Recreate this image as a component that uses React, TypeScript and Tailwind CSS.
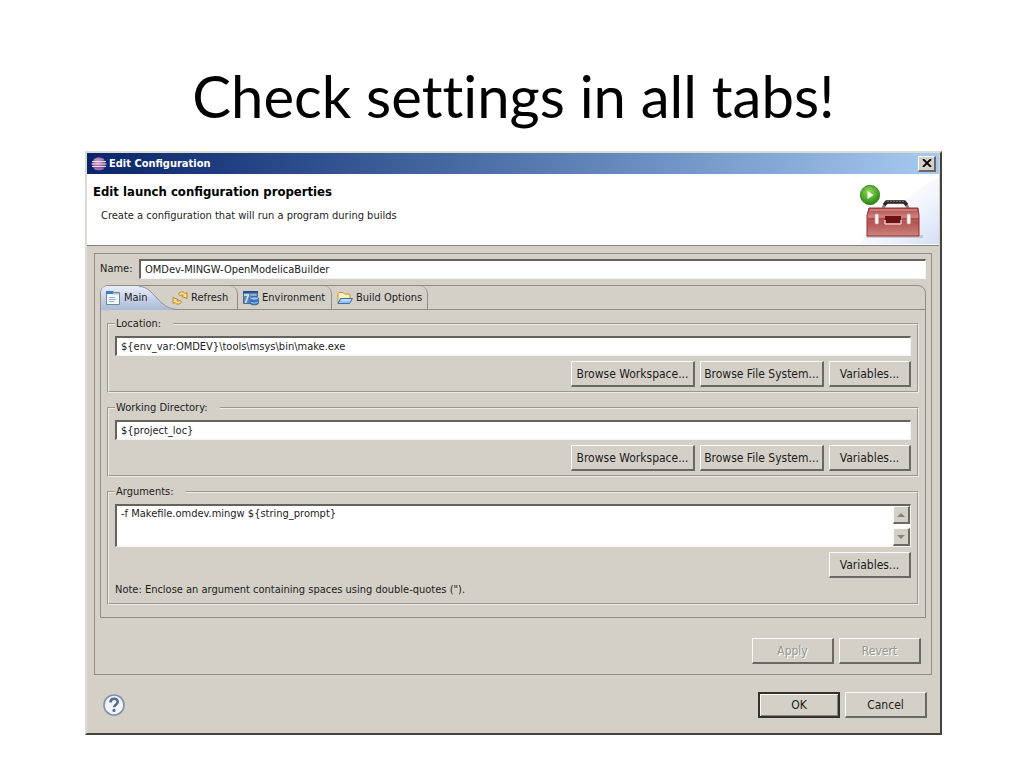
import { useState } from 'react';
import type { ReactNode } from 'react';

const SUNKEN =
  'border border-t-2 border-l-2 border-t-[#66635d] border-l-[#66635d] border-r-[#f6f4f0] border-b-[#f6f4f0] bg-white';

const FIELD = `block w-full pl-1 text-[11px] leading-4 text-[#1c1c1c] outline-none ${SUNKEN}`;

const RAISED =
  'border border-t-[#fbfaf7] border-l-[#fbfaf7] border-r-2 border-b-2 border-r-[#6a6862] border-b-[#6a6862] bg-[#d4d0c8]';

interface DialogButtonProps {
  children: ReactNode;
  wide?: boolean;
  primary?: boolean;
  disabled?: boolean;
}

function DialogButton({ children, wide, primary, disabled }: DialogButtonProps) {
  return (
    <button
      type="button"
      disabled={disabled}
      className={`h-[26px] whitespace-nowrap text-center text-[12px] leading-4 ${wide ? 'w-[124px]' : 'w-[82px]'} ${
        primary ? 'border-2 border-[#33312e] bg-[#d4d0c8] shadow-[inset_1px_1px_0_#fbfaf7,inset_-1px_-1px_0_#8a877f]' : RAISED
      } ${disabled ? 'text-[#98958d] [text-shadow:1px_1px_0_#fff]' : 'text-[#1c1c1c]'}`}
    >
      {children}
    </button>
  );
}

interface GroupProps {
  title: string;
  children: ReactNode;
}

function Group({ title, children }: GroupProps) {
  return (
    <fieldset className="min-w-0 border-2 border-[#eeebe4] [border-style:groove] px-[6px] pb-1">
      <legend className="pl-[1px] pr-3 text-[11px] leading-4">{title}</legend>
      {children}
    </fieldset>
  );
}

function EclipseLogo() {
  return (
    <svg className="h-4 w-4" viewBox="0 0 16 16" aria-hidden="true">
      <defs>
        <radialGradient id="ball" cx="0.4" cy="0.35" r="0.7">
          <stop offset="0" stopColor="#d9a9cf" />
          <stop offset="0.6" stopColor="#8b5a9c" />
          <stop offset="1" stopColor="#4d3a86" />
        </radialGradient>
      </defs>
      <circle cx="8" cy="8" r="6.8" fill="url(#ball)" />
      <path d="M1 5.5h14M0.5 8h15M1 10.5h14" stroke="#f3dcec" strokeWidth="1.1" />
      <path d="M3 3.2h10M3.4 13h9" stroke="#c79cc8" strokeWidth="0.8" />
    </svg>
  );
}

function Toolbox() {
  return (
    <svg className="h-[70px] w-[82px]" viewBox="0 0 82 70" aria-hidden="true">
      <defs>
        <linearGradient id="sky" x1="0" y1="0" x2="1" y2="1">
          <stop offset="0.35" stopColor="#dfe8f8" stopOpacity="0" />
          <stop offset="1" stopColor="#d3dff5" />
        </linearGradient>
        <linearGradient id="redbox" x1="0" y1="0" x2="0" y2="1">
          <stop offset="0" stopColor="#a94a4a" />
          <stop offset="0.3" stopColor="#cf807c" />
          <stop offset="0.5" stopColor="#b25452" />
          <stop offset="1" stopColor="#cd827e" />
        </linearGradient>
        <radialGradient id="go" cx="0.45" cy="0.35" r="0.65">
          <stop offset="0" stopColor="#9edb62" />
          <stop offset="0.6" stopColor="#4eab2b" />
          <stop offset="1" stopColor="#2d7d1b" />
        </radialGradient>
      </defs>
      <path d="M0 70C20 54 50 18 82 3V70z" fill="url(#sky)" />
      <path d="M9 64h57v-3H9z" fill="#a9a2ae" opacity="0.5" />
      <path d="M26 34l3-6h19l3 6" fill="none" stroke="#8f898b" strokeWidth="3" />
      <path d="M27 31l3-3h17l3 3" fill="none" stroke="#33282c" strokeWidth="3.4" />
      <path d="M30 27.500h17" stroke="#6d6267" strokeWidth="1" strokeDasharray="2 1" />
      <path d="M12 34h49l1 7v21H10V41z" fill="url(#redbox)" stroke="#923331" />
      <path d="M11 45h17M45 45h17" stroke="#8e3636" />
      <path d="M13 36h47" stroke="#dda29d" />
      <path d="M28 42h16v7H28z" fill="#6d1115" />
      <path d="M28 50h16M28 46v4M44 46v4" stroke="#e8c4c0" strokeWidth="1.500" />
      <rect x="18" y="40" width="3.500" height="10" rx="1" fill="#f9f3f3" stroke="#c79f9f" strokeWidth="0.6" />
      <rect x="50" y="40" width="3.500" height="10" rx="1" fill="#f9f3f3" stroke="#c79f9f" strokeWidth="0.6" />
      <circle cx="13" cy="21" r="9.7" fill="url(#go)" stroke="#2d7d1b" strokeWidth="0.8" />
      <path d="M10.500 17v8l6-4z" fill="#f7fff0" />
    </svg>
  );
}

function MainIcon() {
  return (
    <svg className="h-4 w-4" viewBox="0 0 16 16" aria-hidden="true">
      <path d="M1.500 2.500h13v12h-13z" fill="#f4f9fe" stroke="#71878f" />
      <path d="M1 1h7.500v3H1z" fill="#3f7fc0" />
      <path d="M8.500 3H14v1.500H8.500z" fill="#a9c8e2" />
      <path d="M4 7.500h6M4 9.500h7M4 11.500h5" stroke="#8cb6e2" />
    </svg>
  );
}

function RefreshIcon() {
  return (
    <svg className="h-4 w-4" viewBox="0 0 16 16" aria-hidden="true">
      <g fill="#fbe08c" stroke="#bd8425" strokeWidth="1" strokeLinejoin="round">
        <path d="M6.500 4C8 1.500 11.500 1 13 3.500l2-1v6L9.800 6.500l1.500-1C10.500 4.500 9 4.500 8.300 6z" />
        <path d="M9.500 12C8 14.500 4.500 15 3 12.500l-2 1v-6l5.200 2-1.500 1c.8 1 2.300 1 3-.5z" />
      </g>
    </svg>
  );
}

function EnvironmentIcon() {
  return (
    <svg className="h-4 w-4" viewBox="0 0 16 16" aria-hidden="true">
      <path d="M0.500 1.500h14v5h-6v7h-8z" fill="#5f88bb" stroke="#44699b" />
      <path d="M0 1h15v2H0z" fill="#2b4f84" />
      <path d="M1 5h5M5.500 5L2.500 13" stroke="#e6edf6" strokeWidth="1.400" fill="none" />
      <path d="M7.500 5h6" stroke="#bcd0e8" />
      <path d="M7 8.500v4.500c0 2.500 8.500 2.500 8.500 0V8.500z" fill="#3474bf" stroke="#265a9d" strokeWidth="0.700" />
      <ellipse cx="11.250" cy="8.500" rx="4.250" ry="1.700" fill="#9cc3ec" stroke="#265a9d" strokeWidth="0.700" />
      <path d="M7.500 11.800c1 1.800 6.500 1.800 7.500 0" fill="none" stroke="#a9cdf3" />
    </svg>
  );
}

function FolderIcon() {
  return (
    <svg className="h-4 w-4" viewBox="0 0 16 16" aria-hidden="true">
      <path d="M1 13V3.500l1-1h4l1.500 1.500H13V8" fill="#fdf0c0" stroke="#c8922a" />
      <path d="M3.500 8.500h12L12.500 13.500H1z" fill="#9cc1ec" stroke="#3a6fb0" strokeLinejoin="round" />
      <path d="M4.500 10h9" stroke="#e6f1fc" />
    </svg>
  );
}

const TABS = [
  { name: 'Main', icon: <MainIcon />, look: 'w-[66px] pl-1' },
  { name: 'Refresh', icon: <RefreshIcon />, look: 'w-[71px] pl-[5px] border-r rounded-tr-lg' },
  { name: 'Environment', icon: <EnvironmentIcon />, look: 'w-[94px] pl-[5px] border-r rounded-tr-lg' },
  { name: 'Build Options', icon: <FolderIcon />, look: 'w-[96px] pl-[5px] border-r rounded-tr-lg' },
];

function TabStrip() {
  const [active, setActive] = useState('Main');

  return (
    <div role="tablist" className="relative flex h-[24px] border-b border-[#908d85]">
      {/* swooping shape behind the selected tab */}
      <svg className="absolute left-0 top-0 h-[24px] w-[80px]" viewBox="0 0 80 24" aria-hidden="true">
        <defs>
          <linearGradient id="tab" x1="0" y1="0" x2="0" y2="1">
            <stop offset="0" stopColor="#e9eef8" />
            <stop offset="1" stopColor="#a9b9d8" />
          </linearGradient>
        </defs>
        <path d="M0 24V7Q0 0 7 0H38C54 0 56 24 78 24z" fill="url(#tab)" />
        <path d="M38 0.500C54 0.500 56 23.500 78 23.500" fill="none" stroke="#8f9098" />
      </svg>
      {TABS.map((tab) => (
        <button
          key={tab.name}
          type="button"
          role="tab"
          aria-selected={active === tab.name}
          onClick={() => setActive(tab.name)}
          className={`relative flex items-center gap-[3px] whitespace-nowrap border-[#908d85] text-[11px] leading-4 ${tab.look}`}
        >
          {tab.icon}
          {tab.name}
        </button>
      ))}
    </div>
  );
}

function BrowseButtons() {
  return (
    <div className="mt-[5px] flex justify-end gap-[5px]">
      <DialogButton wide>Browse Workspace...</DialogButton>
      <DialogButton wide>Browse File System...</DialogButton>
      <DialogButton>Variables...</DialogButton>
    </div>
  );
}

function ScrollArrow({ up }: { up?: boolean }) {
  return (
    <button type="button" aria-label={up ? 'Scroll up' : 'Scroll down'} className={`flex h-[18px] w-[17px] items-center justify-center ${RAISED}`}>
      <svg className="h-1 w-2" viewBox="0 0 8 4" aria-hidden="true">
        <path d={up ? 'M0 4L4 0L8 4z' : 'M0 0L4 4L8 0z'} fill="#85827b" />
      </svg>
    </button>
  );
}

export default function App() {
  return (
    <main className="min-h-screen bg-white pl-[85px] pr-[82px] pt-[60px] text-[#1c1c1c]">
      <h1 className="text-center font-[Lato,sans-serif] text-[58px] leading-[72px] text-black [font-variant-ligatures:none]">
        Check settings in all tabs!
      </h1>

      <section
        aria-label="Edit Configuration"
        className="mt-[19px] border-2 border-t-[#dedbd4] border-l-[#dedbd4] border-r-[#44423f] border-b-[#44423f] bg-[#d4d0c8] pr-[1px] font-['DejaVu_Sans_Condensed','DejaVu_Sans',sans-serif] text-[11px] leading-4"
      >
        <div className="flex h-[21px] items-center bg-linear-to-r from-[#0a246a] to-[#a6caf0] pl-1 pr-[3px]">
          <EclipseLogo />
          <span className="ml-[2px] flex-1 font-bold text-white">Edit Configuration</span>
          <button type="button" aria-label="Close" className={`flex h-4 w-[18px] items-center justify-center ${RAISED}`}>
            <svg className="h-2 w-[10px]" viewBox="0 0 10 8" aria-hidden="true">
              <path d="M1 0L9 8M9 0L1 8" stroke="#000" strokeWidth="1.800" />
            </svg>
          </button>
        </div>

        <header className="flex h-[72px] justify-between border-b border-[#85827b] bg-white pl-[6px]">
          <div className="pt-[9px]">
            <h2 className="text-[13px] font-bold leading-[18px] text-black">Edit launch configuration properties</h2>
            <p className="mt-[7px] pl-2">Create a configuration that will run a program during builds</p>
          </div>
          <Toolbox />
        </header>

        <div className="mx-[7px] mt-[7px] border border-[#908d85] px-[5px] pb-[10px] pt-[5px]">
          <div className="flex items-center gap-[5px]">
            <label htmlFor="config-name" className="w-[34px] shrink-0 whitespace-nowrap">
              Name:
            </label>
            <input id="config-name" className={`${FIELD} h-[20px]`} defaultValue="OMDev-MINGW-OpenModelicaBuilder" />
          </div>

          <div className="mt-[6px] rounded-t-lg border border-[#908d85]">
            <TabStrip />
            <div className="flex flex-col gap-[7px] px-[6px] pb-3 pt-[6px]">
              <Group title="Location:">
                <input aria-label="Location" className={`${FIELD} mt-1 h-[20px]`} defaultValue="${env_var:OMDEV}\tools\msys\bin\make.exe" />
                <BrowseButtons />
              </Group>
              <Group title="Working Directory:">
                <input aria-label="Working Directory" className={`${FIELD} mt-1 h-[20px]`} defaultValue="${project_loc}" />
                <BrowseButtons />
              </Group>
              <Group title="Arguments:">
                <div className={`mt-1 flex ${SUNKEN}`}>
                  <textarea
                    aria-label="Arguments"
                    className="block h-[40px] flex-1 resize-none overflow-hidden pl-1 text-[11px] leading-4 outline-none"
                    defaultValue="-f Makefile.omdev.mingw ${string_prompt}"
                  />
                  <div className="flex flex-col justify-between">
                    <ScrollArrow up />
                    <ScrollArrow />
                  </div>
                </div>
                <div className="mt-[5px] flex justify-end">
                  <DialogButton>Variables...</DialogButton>
                </div>
                <p className="mt-1 pb-[1px]">Note: Enclose an argument containing spaces using double-quotes (&quot;).</p>
              </Group>
            </div>
          </div>

          <div className="mr-[5px] mt-5 flex justify-end gap-[5px]">
            <DialogButton disabled>Apply</DialogButton>
            <DialogButton disabled>Revert</DialogButton>
          </div>
        </div>

        <footer className="flex items-center justify-between pb-[15px] pl-4 pr-3 pt-[17px]">
          <button type="button" aria-label="Help">
            <svg className="block h-[22px] w-[22px]" viewBox="0 0 22 22" aria-hidden="true">
              <circle cx="11" cy="11" r="10" fill="#f1f4fa" stroke="#8290ab" strokeWidth="1.600" />
              <path d="M7.500 8.500C7.500 3.500 14.800 3.700 14.700 8c0 2.500-3.600 2.800-3.600 5.200" fill="none" stroke="#566b90" strokeWidth="2.600" />
              <circle cx="11" cy="16.400" r="1.600" fill="#566b90" />
            </svg>
          </button>
          <div className="flex gap-[5px]">
            <DialogButton primary>OK</DialogButton>
            <DialogButton>Cancel</DialogButton>
          </div>
        </footer>
      </section>
    </main>
  );
}
